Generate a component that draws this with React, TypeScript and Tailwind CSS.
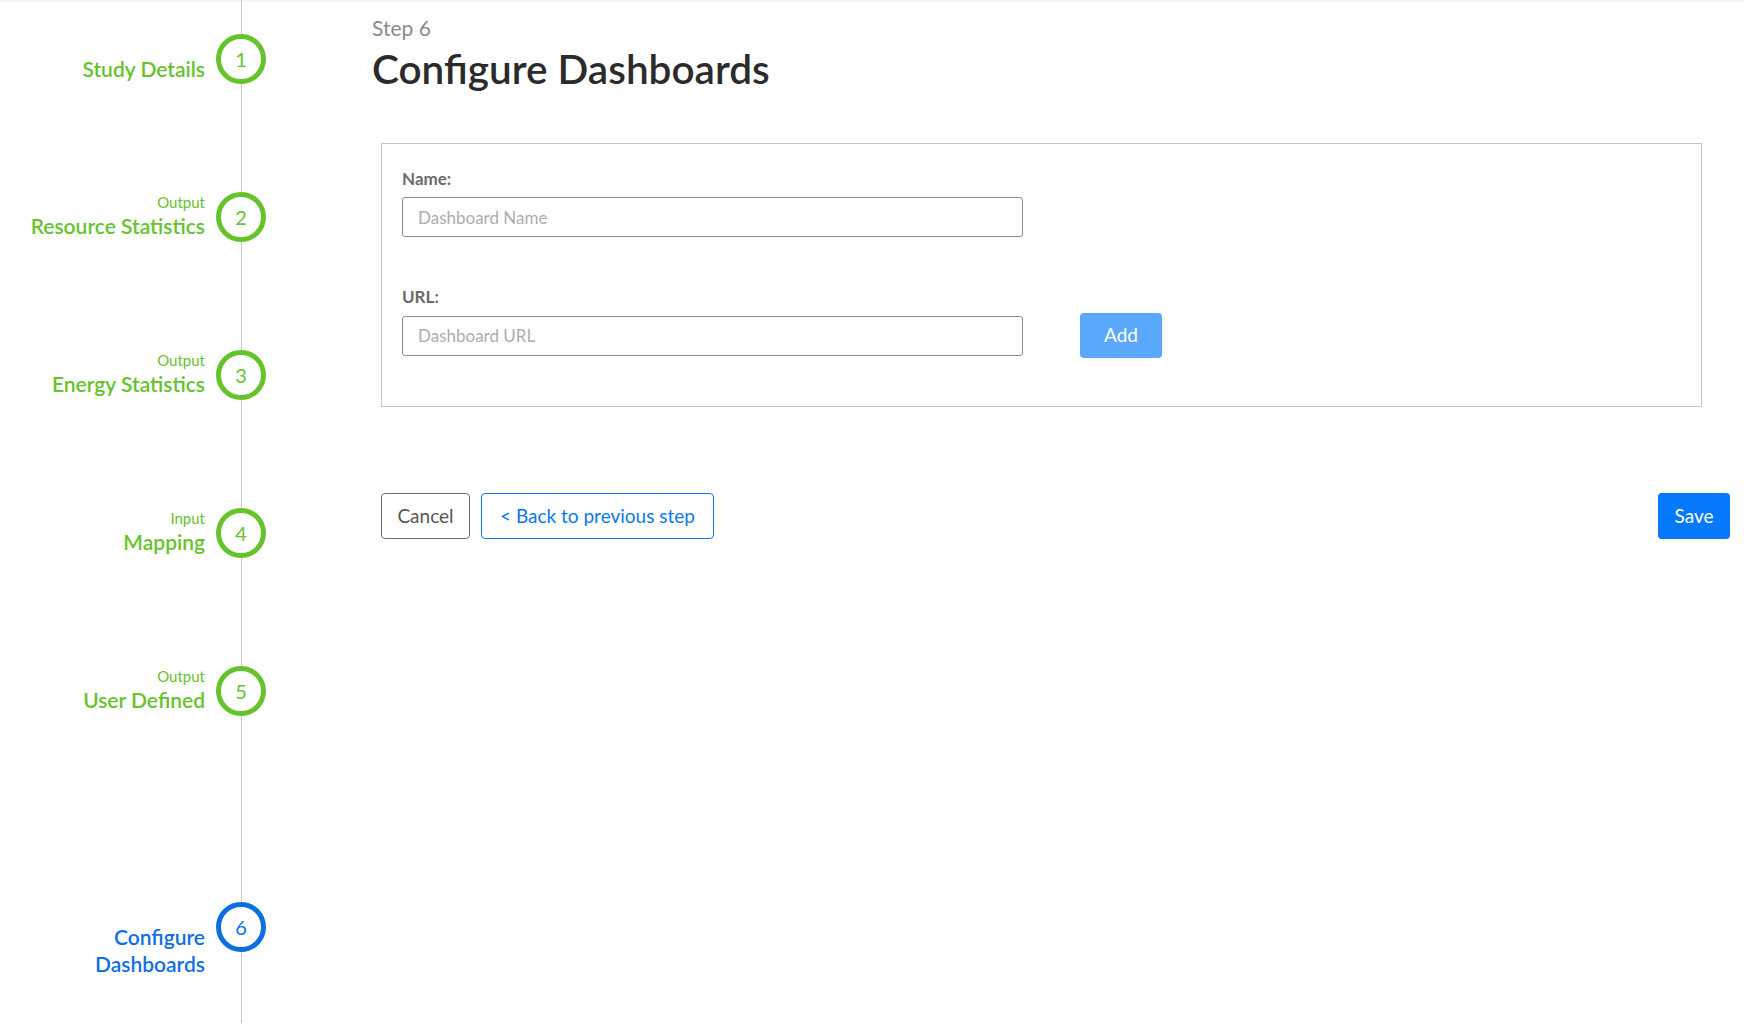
import React from "react";

type Step = { n: number; sub?: string; label: string[]; active?: boolean; h: string };

const steps: Step[] = [
  { n: 1, label: ["Study Details"], h: "h-[158px]" },
  { n: 2, sub: "Output", label: ["Resource Statistics"], h: "h-[158px]" },
  { n: 3, sub: "Output", label: ["Energy Statistics"], h: "h-[158px]" },
  { n: 4, sub: "Input", label: ["Mapping"], h: "h-[158px]" },
  { n: 5, sub: "Output", label: ["User Defined"], h: "h-[236px]" },
  { n: 6, label: ["Configure", "Dashboards"], active: true, h: "h-[100px]" },
];

function StepRow({ s }: { s: Step }) {
  const color = s.active ? "text-[#0f6fe3]" : "text-[#66c32b]";
  const border = s.active ? "border-[#0c6ee0]" : "border-[#66c32b]";
  return (
    <div className={`flex items-start ${s.h}`}>
      <div className={`w-[205px] text-right ${color} ${s.sub ? "mt-[0px]" : "mt-[21px]"}`}>
        {s.sub && <div className="text-[15px] leading-[20px]">{s.sub}</div>}
        {s.label.map((l) => (
          <div key={l} className="text-[21px] leading-[27px] font-semibold">
            {l}
          </div>
        ))}
      </div>
      <div
        className={`relative z-10 ml-[11px] flex h-[50px] w-[50px] shrink-0 items-center justify-center rounded-full border-[5px] ${border} bg-white text-[20px] ${color}`}
      >
        {s.n}
      </div>
    </div>
  );
}

export default function App() {
  return (
    <div
      className="flex h-[1026px] w-full overflow-hidden bg-white shadow-[inset_0_3px_3px_-2px_rgba(0,0,0,0.08)]"
      style={{ fontFamily: "Lato, 'Noto Sans', sans-serif" }}
    >
      <aside className="relative w-[372px] shrink-0 pt-[34px]">
        <div className="absolute bottom-[3px] left-[241px] top-0 w-px bg-[#c8c8c8]" />
        {steps.map((s) => (
          <StepRow key={s.n} s={s} />
        ))}
      </aside>
      <main className="flex-1 pr-[14px] pt-[14px]">
        <div className="text-[21px] leading-[28px] text-[#8c8c8c]">Step 6</div>
        <h1 className="mt-[3px] text-[40.5px] font-semibold leading-[48px] text-[#2b2b2b]">
          Configure Dashboards
        </h1>
        <section className="ml-[9px] mr-[28px] mt-[50px] border border-[#c4c4c4] px-[20px] pb-[48px] pt-[24px]">
          <label className="block text-[17px] font-bold leading-[22px] text-[#6b6b6b]">Name:</label>
          <input
            className="mt-[7px] block h-[40px] w-[621px] rounded-[3px] border border-[#8c8c8c] px-[15px] text-[17px] text-[#333] outline-none placeholder:text-[#adadad]"
            placeholder="Dashboard Name"
          />
          <label className="mt-[49px] block text-[17px] font-bold leading-[22px] text-[#6b6b6b]">URL:</label>
          <div className="mt-[5px] flex items-center">
            <input
              className="block h-[40px] w-[621px] rounded-[3px] border border-[#8c8c8c] px-[15px] text-[17px] text-[#333] outline-none placeholder:text-[#adadad]"
              placeholder="Dashboard URL"
            />
            <button className="ml-[57px] h-[45px] w-[82px] rounded-[4px] bg-[#5aa8fb] text-[19px] text-white">
              Add
            </button>
          </div>
        </section>
        <div className="ml-[9px] mt-[86px] flex items-center">
          <button className="h-[46px] w-[89px] rounded-[4px] border border-[#6b6b6b] text-[19px] text-[#555]">
            Cancel
          </button>
          <button className="ml-[11px] h-[46px] w-[233px] rounded-[4px] border border-[#0a78f0] text-[19px] text-[#0a78f0]">
            &lt; Back to previous step
          </button>
          <button className="ml-auto h-[46px] w-[72px] rounded-[4px] bg-[#0579fa] text-[19px] text-white">
            Save
          </button>
        </div>
      </main>
    </div>
  );
}
